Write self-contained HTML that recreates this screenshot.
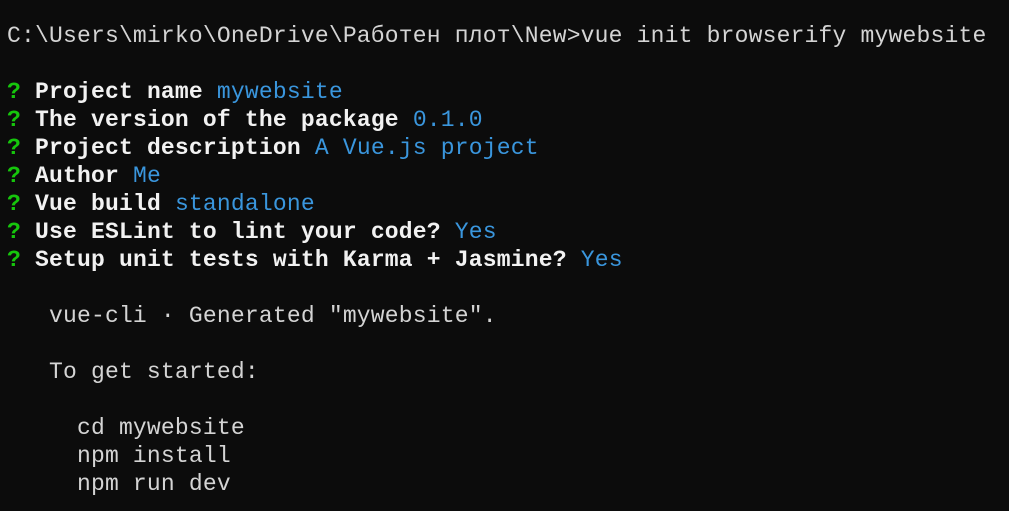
<!DOCTYPE html>
<html><head><meta charset="utf-8"><style>
html,body{margin:0;padding:0;background:#0c0c0c;width:1009px;height:511px;overflow:hidden}
pre{margin:0;position:absolute;left:7px;top:22px;font-family:"Liberation Mono",monospace;font-size:23px;letter-spacing:0.19px;line-height:28px;color:#d4d4d4;white-space:pre}
.g{color:#16c60c;font-weight:bold}.b{color:#3a96dd}.w{color:#f2f2f2;font-weight:bold}
</style></head><body><pre>C:\Users\mirko\OneDrive\Работен плот\New&gt;vue init browserify mywebsite

<span class="g">?</span> <span class="w">Project name</span> <span class="b">mywebsite</span>
<span class="g">?</span> <span class="w">The version of the package</span> <span class="b">0.1.0</span>
<span class="g">?</span> <span class="w">Project description</span> <span class="b">A Vue.js project</span>
<span class="g">?</span> <span class="w">Author</span> <span class="b">Me</span>
<span class="g">?</span> <span class="w">Vue build</span> <span class="b">standalone</span>
<span class="g">?</span> <span class="w">Use ESLint to lint your code?</span> <span class="b">Yes</span>
<span class="g">?</span> <span class="w">Setup unit tests with Karma + Jasmine?</span> <span class="b">Yes</span>

   vue-cli · Generated "mywebsite".

   To get started:

     cd mywebsite
     npm install
     npm run dev</pre></body></html>
